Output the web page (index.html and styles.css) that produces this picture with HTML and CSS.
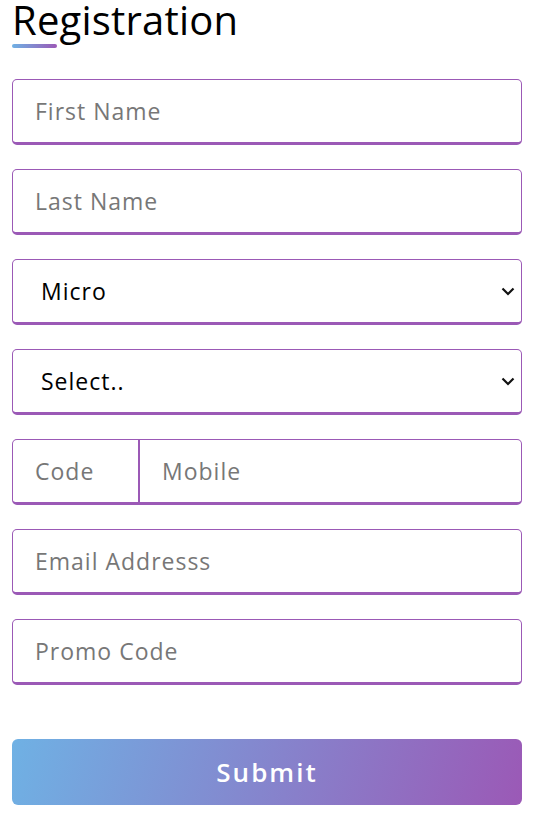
FILE: index.html
```html
<!DOCTYPE html>
<html lang="en">
<head>
<meta charset="utf-8">
<title>Registration</title>
<link rel="stylesheet" href="styles.css">
</head>
<body>
<div class="page">
  <h1 class="title">Registration</h1>
  <div class="title-bar"></div>
  <form class="form">
    <input class="field" type="text" placeholder="First Name">
    <input class="field" type="text" placeholder="Last Name">
    <div class="select-wrap">
      <select class="field select">
        <option>Micro</option>
      </select>
      <svg class="chevron" width="14" height="9" viewBox="0 0 14 9"><path d="M1.5 1.5 L7 7 L12.5 1.5" fill="none" stroke="#111" stroke-width="2.2"/></svg>
    </div>
    <div class="select-wrap">
      <select class="field select">
        <option>Select..</option>
      </select>
      <svg class="chevron" width="14" height="9" viewBox="0 0 14 9"><path d="M1.5 1.5 L7 7 L12.5 1.5" fill="none" stroke="#111" stroke-width="2.2"/></svg>
    </div>
    <div class="field phone">
      <input class="phone-code" type="text" placeholder="Code">
      <input class="phone-number" type="text" placeholder="Mobile">
    </div>
    <input class="field" type="email" placeholder="Email Addresss">
    <input class="field" type="text" placeholder="Promo Code">
    <button class="submit" type="button">Submit</button>
  </form>
</div>
</body>
</html>
```
FILE: styles.css
```css
* { box-sizing: border-box; }
body {
  margin: 0;
  background: #fff;
  font-family: "Open Sans", "Noto Sans", sans-serif;
}
.page {
  padding: 0 11px 0 12px;
}
.title {
  margin: 0;
  font-size: 40px;
  font-weight: 400;
  line-height: 39px;
  color: #000;
  letter-spacing: 0.2px;
}
.title-bar {
  width: 45px;
  height: 4px;
  margin-top: 5px;
  border-radius: 3px;
  background: linear-gradient(90deg, #6fb1e4, #9b59b6);
}
.form {
  display: flex;
  flex-direction: column;
  gap: 24px;
  margin-top: 31px;
}
.field {
  display: block;
  width: 100%;
  height: 66px;
  margin: 0;
  border: 1px solid #9b59b6;
  border-bottom-width: 3px;
  border-radius: 5px;
  background: #fff;
  padding: 0 22px;
  font-family: inherit;
  font-size: 23px;
  letter-spacing: 1px;
  color: #000;
  outline: none;
}
.field::placeholder, .phone input::placeholder { color: #777; }
.select-wrap {
  position: relative;
}
.select {
  -webkit-appearance: none;
  appearance: none;
  padding: 0 36px 0 28px;
}
.chevron {
  position: absolute;
  right: 7px;
  top: 28px;
  pointer-events: none;
}
.phone {
  display: flex;
  padding: 0;
  overflow: hidden;
}
.phone input {
  border: none;
  height: 100%;
  font-family: inherit;
  font-size: 23px;
  letter-spacing: 1px;
  background: transparent;
  outline: none;
  padding: 0 22px;
  min-width: 0;
}
.phone-code {
  width: 127px;
  flex: none;
  border-right: 2px solid #9b59b6 !important;
}
.phone-number {
  flex: 1;
}
.submit {
  margin-top: 30px;
  height: 66px;
  width: 100%;
  border: none;
  border-radius: 6px;
  background: linear-gradient(105deg, #6fb1e4 0%, #9b59b6 100%);
  color: #fff;
  font-family: inherit;
  font-size: 26px;
  font-weight: 600;
  letter-spacing: 2px;
}
```
